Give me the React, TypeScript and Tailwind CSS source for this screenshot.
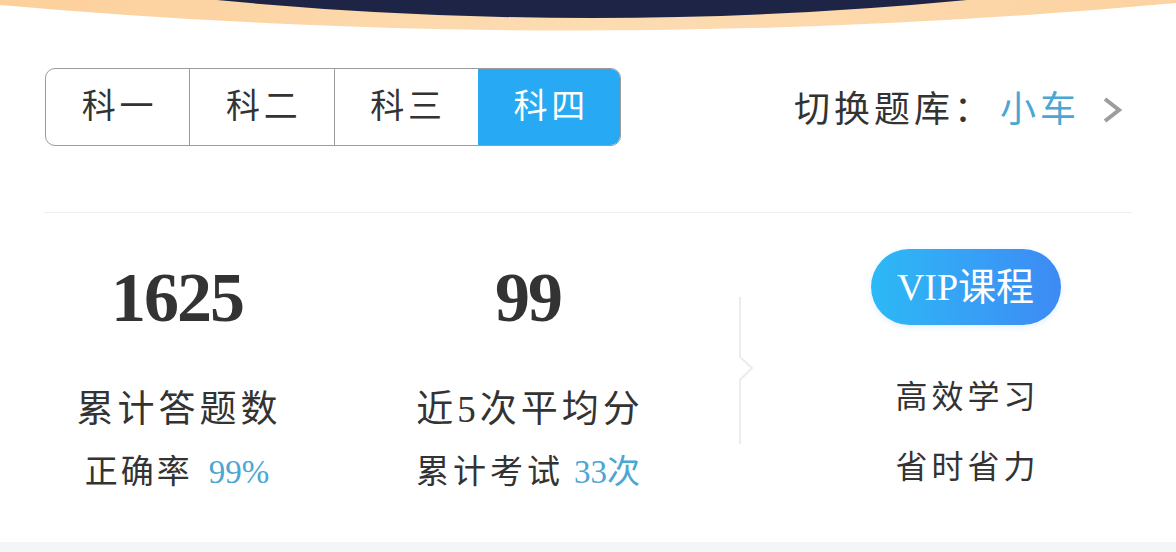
import React from "react";

const serif = "font-['Liberation_Serif','Noto_Sans_CJK_SC',serif]";

export default function App() {
  const tabs = ["科一", "科二", "科三", "科四"];
  return (
    <div
      className={`w-[1176px] h-[552px] bg-white overflow-hidden flex flex-col ${serif} text-[#333333]`}
    >
      <svg width="1176" height="32" viewBox="0 0 1176 32" className="block shrink-0">
        <defs>
          <linearGradient id="peach" x1="0" x2="1" y1="0" y2="0">
            <stop offset="0" stopColor="#fcd09c" />
            <stop offset="0.5" stopColor="#fddcb2" />
            <stop offset="1" stopColor="#fcd3a2" />
          </linearGradient>
        </defs>
        <path d="M0,0 L0,5 Q588,57 1176,3 L1176,0 Z" fill="url(#peach)" />
        <path d="M217,0 Q592,36 967,0 Z" fill="#1e2445" />
      </svg>

      <div className="flex items-center mt-[36px] h-[78px] shrink-0">
        <div className="ml-[45px] flex h-[78px] w-[576px] rounded-[10px] border border-[#9c9c9c] overflow-hidden">
          {tabs.map((t, i) => (
            <div
              key={t}
              className={`flex-1 flex items-center justify-center text-[34px] leading-none tracking-[4px] pl-[4px] ${
                i < 3 ? "border-r border-[#9c9c9c] text-[#333333]" : "bg-[#27aaf3] text-white -my-px -mr-px"
              } ${i === 2 ? "border-r-0" : ""}`}
            >
              {t}
            </div>
          ))}
        </div>
        <div className="ml-auto mr-[54px] flex items-center pt-[6px]">
          <span className="text-[36px] leading-none tracking-[4px] text-[#333333]">切换题库：</span>
          <span className="ml-[6px] text-[36px] leading-none tracking-[4px] text-[#4aa6d3]">小车</span>
          <svg width="20" height="28" viewBox="0 0 20 28" className="ml-[22px]">
            <polyline points="3,3 17,14 3,25" fill="none" stroke="#9d9d9d" strokeWidth="4" />
          </svg>
        </div>
      </div>

      <div className="mt-[66px] mx-[44px] w-[1088px] h-px bg-[#efefef] shrink-0" />

      <div className="flex flex-1 items-start">
        <div className="w-[354px] flex flex-col items-center pt-[50px]">
          <div className="text-[70px] leading-[70px] font-bold tracking-[-2px] text-[#333333]">1625</div>
          <div className="mt-[58px] text-[37px] leading-[37px] tracking-[4px] pl-[4px]">累计答题数</div>
          <div className="mt-[28px] flex items-baseline text-[33px] leading-[33px]">
            <span className="tracking-[3px]">正确率</span>
            <span className="ml-[16px] text-[#4aa6d3]">99%</span>
          </div>
        </div>
        <div className="w-[348px] flex flex-col items-center pt-[50px]">
          <div className="text-[70px] leading-[70px] font-bold tracking-[-2px] text-[#333333]">99</div>
          <div className="mt-[58px] text-[37px] leading-[37px] tracking-[4px] pl-[4px]">近5次平均分</div>
          <div className="mt-[28px] flex items-baseline text-[33px] leading-[33px]">
            <span className="tracking-[4px]">累计考试</span>
            <span className="ml-[10px] text-[#4aa6d3]">33次</span>
          </div>
        </div>
        <svg width="16" height="147" viewBox="0 0 16 147" className="ml-[37px] mt-[84px] shrink-0">
          <path d="M1,0 V60 L13,71 L1,83 V147" fill="none" stroke="#ececec" strokeWidth="2" />
        </svg>
        <div className="flex-1 flex flex-col items-center pt-[36px]">
          <div className="w-[190px] h-[76px] rounded-full bg-gradient-to-r from-[#2cb9f6] to-[#3d8af4] flex items-center justify-center text-white text-[38px] leading-none shadow-[0_2px_6px_rgba(60,150,240,0.15)]">
            VIP课程
          </div>
          <div className="mt-[56px] text-[32px] leading-[32px] tracking-[4px] pl-[4px]">高效学习</div>
          <div className="mt-[38px] text-[32px] leading-[32px] tracking-[4px] pl-[4px]">省时省力</div>
        </div>
      </div>

      <div className="h-[10px] bg-[#f2f6f7] shrink-0" />
    </div>
  );
}
